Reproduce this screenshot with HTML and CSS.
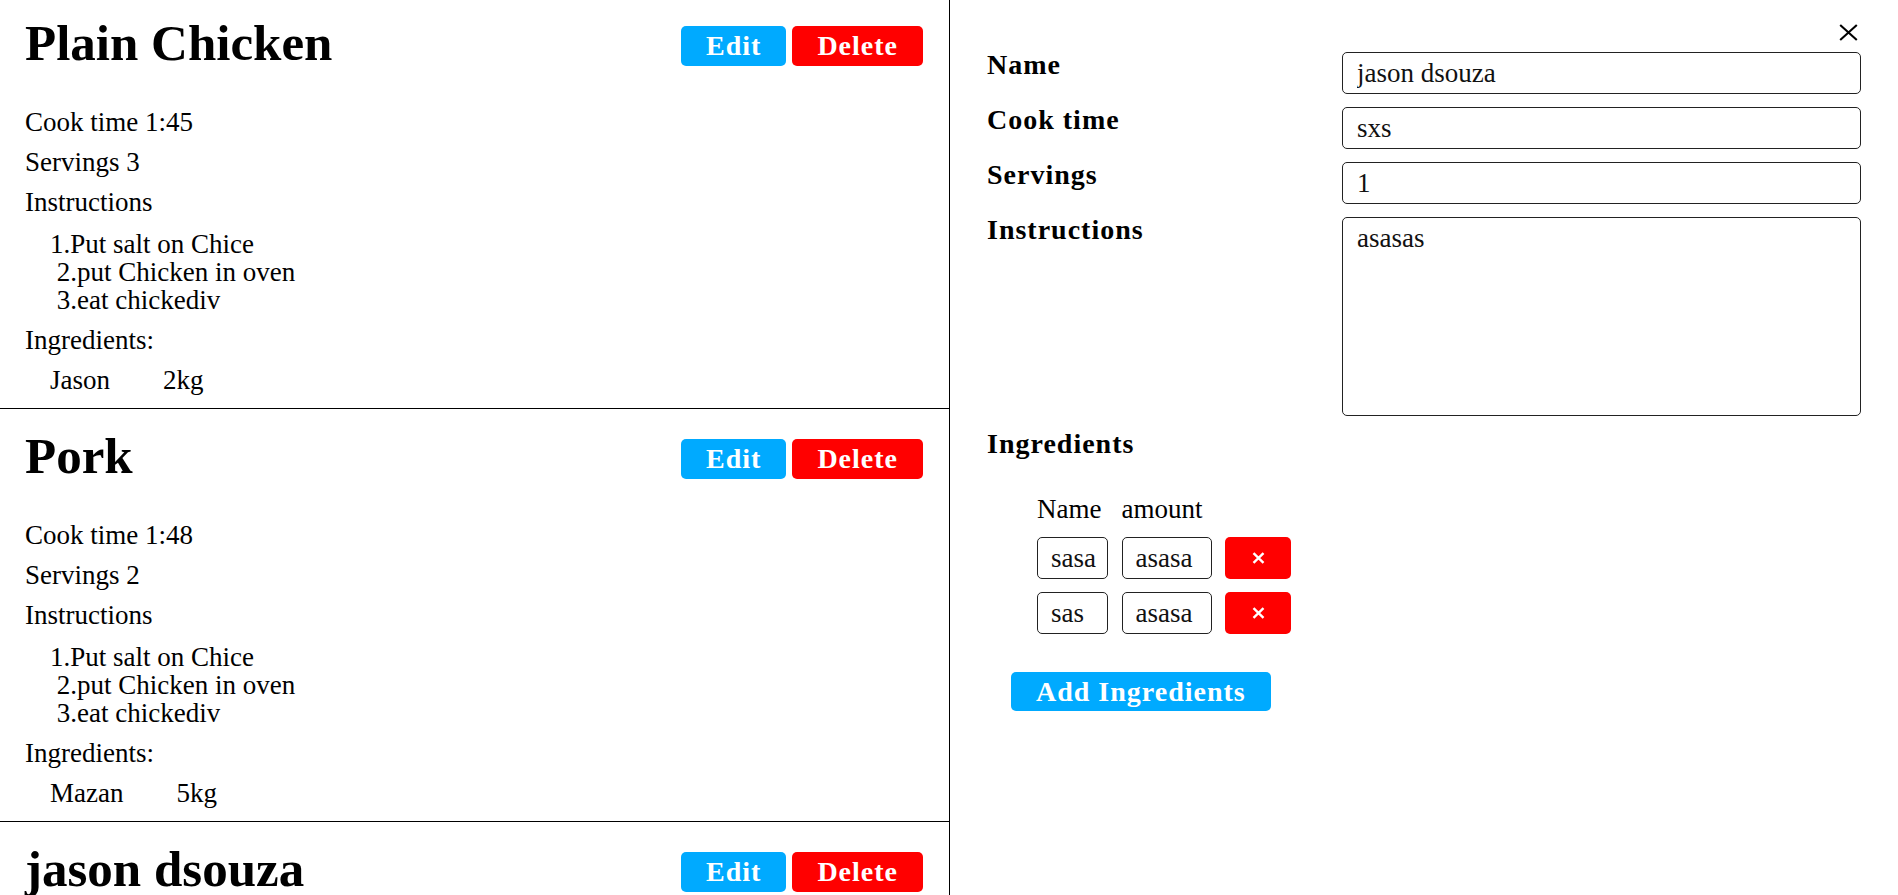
FILE: index.html
```html
<!DOCTYPE html>
<html lang="en">
<head>
<meta charset="utf-8">
<title>Recipes</title>
<link rel="stylesheet" href="styles.css">
</head>
<body>
<div class="app">
  <div class="recipe-list">
    <div class="recipe">
      <div class="recipe-header">
        <h3 class="recipe-title">Plain Chicken</h3>
        <div class="recipe-actions">
          <button class="btn btn-primary">Edit</button>
          <button class="btn btn-danger">Delete</button>
        </div>
      </div>
      <div class="recipe-row first">Cook time 1:45</div>
      <div class="recipe-row">Servings 3</div>
      <div class="recipe-row">Instructions</div>
      <div class="recipe-steps">1.Put salt on Chice
 2.put Chicken in oven
 3.eat chickediv</div>
      <div class="recipe-row ingr-title">Ingredients:</div>
      <div class="ingredient-list">
        <div class="ingredient"><span class="ing-name">Jason</span><span>2kg</span></div>
      </div>
    </div>
    <div class="recipe">
      <div class="recipe-header">
        <h3 class="recipe-title">Pork</h3>
        <div class="recipe-actions">
          <button class="btn btn-primary">Edit</button>
          <button class="btn btn-danger">Delete</button>
        </div>
      </div>
      <div class="recipe-row first">Cook time 1:48</div>
      <div class="recipe-row">Servings 2</div>
      <div class="recipe-row">Instructions</div>
      <div class="recipe-steps">1.Put salt on Chice
 2.put Chicken in oven
 3.eat chickediv</div>
      <div class="recipe-row ingr-title">Ingredients:</div>
      <div class="ingredient-list">
        <div class="ingredient"><span class="ing-name">Mazan</span><span>5kg</span></div>
      </div>
    </div>
    <div class="recipe">
      <div class="recipe-header">
        <h3 class="recipe-title">jason dsouza</h3>
        <div class="recipe-actions">
          <button class="btn btn-primary">Edit</button>
          <button class="btn btn-danger">Delete</button>
        </div>
      </div>
    </div>
  </div>

  <div class="recipe-edit">
    <div class="edit-close-row">
      <button class="close-btn" aria-label="Close">
        <svg width="19" height="17" viewBox="0 0 19 17"><path d="M1.2 1 L17.8 16 M17.8 1 L1.2 16" stroke="#000" stroke-width="2.1" fill="none"/></svg>
      </button>
    </div>
    <div class="edit-grid">
      <label class="edit-label" for="name">Name</label>
      <input class="edit-input" id="name" type="text" value="jason dsouza">
      <label class="edit-label" for="cookTime">Cook time</label>
      <input class="edit-input" id="cookTime" type="text" value="sxs">
      <label class="edit-label" for="servings">Servings</label>
      <input class="edit-input" id="servings" type="text" value="1">
      <label class="edit-label" for="instructions">Instructions</label>
      <textarea class="edit-input edit-textarea" id="instructions">asasas</textarea>
      <div class="edit-label edit-section-label">Ingredients</div>
    </div>
    <div class="ingredient-grid">
      <div class="col-head">Name</div>
      <div class="col-head">amount</div>
      <div></div>
      <input class="edit-input small-input" type="text" value="sasa">
      <input class="edit-input small-input" type="text" value="asasa">
      <button class="remove-btn" aria-label="Remove">
        <svg width="13" height="12" viewBox="0 0 13 12"><path d="M1.5 1.2 L11.5 10.8 M11.5 1.2 L1.5 10.8" stroke="#fff" stroke-width="2.4" fill="none"/></svg>
      </button>
      <input class="edit-input small-input" type="text" value="sas">
      <input class="edit-input small-input" type="text" value="asasa">
      <button class="remove-btn" aria-label="Remove">
        <svg width="13" height="12" viewBox="0 0 13 12"><path d="M1.5 1.2 L11.5 10.8 M11.5 1.2 L1.5 10.8" stroke="#fff" stroke-width="2.4" fill="none"/></svg>
      </button>
    </div>
    <button class="btn btn-primary add-btn">Add Ingredients</button>
  </div>
</div>
</body>
</html>
```

FILE: styles.css
```css
* {
  box-sizing: border-box;
}

html,
body {
  margin: 0;
  padding: 0;
  height: 100%;
}

body {
  font-family: "Liberation Serif", "Times New Roman", serif;
  font-size: 27px;
  color: #000;
  background: #fff;
  overflow: hidden;
}

.app {
  display: flex;
  height: 100vh;
}

/* ---------- recipe list ---------- */

.recipe-list {
  width: 950px;
  flex: none;
  border-right: 1px solid #000;
  overflow: hidden;
}

.recipe {
  padding: 19px 26px 13px 25px;
  border-bottom: 1px solid #000;
}

.recipe:first-child {
  padding-top: 15px;
}

.recipe-header {
  display: flex;
  justify-content: space-between;
  align-items: flex-start;
}

.recipe-title {
  margin: 0;
  font-size: 51px;
  line-height: 56px;
  font-weight: bold;
}

.recipe-actions {
  display: flex;
  gap: 6px;
  margin-top: 11px;
}

.btn {
  font-family: inherit;
  font-size: 28px;
  font-weight: bold;
  letter-spacing: 1px;
  color: #fff;
  border: none;
  border-radius: 5px;
  height: 40px;
  line-height: 40px;
  padding: 0 25px;
  cursor: pointer;
}

.btn-primary {
  background: #00aaff;
}

.btn-danger {
  background: #ff0000;
}

.recipe-row {
  line-height: 30px;
  margin-top: 10px;
}

.recipe-row.first {
  margin-top: 36px;
}

.recipe-steps {
  white-space: pre-wrap;
  line-height: 28px;
  margin: 13px 0 0 25px;
}

.recipe-row.ingr-title {
  margin-top: 11px;
}

.ingredient-list {
  margin: 10px 0 0 25px;
}

.ingredient {
  line-height: 30px;
}

.ing-name {
  margin-right: 53px;
}

/* ---------- edit panel ---------- */

.recipe-edit {
  flex: 1;
  padding: 0 37px;
}

.edit-close-row {
  display: flex;
  justify-content: flex-end;
  padding-top: 24px;
  margin-right: 3px;
}

.close-btn {
  background: none;
  border: none;
  padding: 0;
  width: 19px;
  height: 17px;
  cursor: pointer;
}

.close-btn svg {
  display: block;
}

.edit-grid {
  display: grid;
  grid-template-columns: 355px 1fr;
  row-gap: 13px;
  margin-top: 11px;
}

.edit-label {
  font-weight: bold;
  font-size: 28px;
  letter-spacing: 1px;
  line-height: 26px;
}

.edit-section-label {
  grid-column: 1 / -1;
  padding-top: 2px;
}

.edit-input {
  font-family: inherit;
  font-size: 27px;
  color: #111;
  height: 42px;
  width: 100%;
  border: 1px solid #222;
  border-radius: 5px;
  padding: 0 14px;
  background: #fff;
  outline: none;
  margin: 0;
}

.edit-textarea {
  height: 199px;
  padding: 5px 14px;
  line-height: 30px;
  resize: none;
  display: block;
}

.ingredient-grid {
  display: grid;
  grid-template-columns: 71px 90px 66px;
  column-gap: 13.5px;
  row-gap: 13px;
  margin: 37px 0 0 50px;
}

.col-head {
  line-height: 30px;
}

.small-input {
  height: 42px;
  padding: 0 0 0 13px;
}

.remove-btn {
  background: #ff0000;
  border: none;
  border-radius: 5px;
  height: 42px;
  padding: 0;
  display: flex;
  align-items: center;
  justify-content: center;
  cursor: pointer;
}

.remove-btn svg {
  display: block;
}

.add-btn {
  display: block;
  margin: 38px 0 0 24px;
  height: 39px;
  line-height: 39px;
  padding: 0 25px;
}
```
